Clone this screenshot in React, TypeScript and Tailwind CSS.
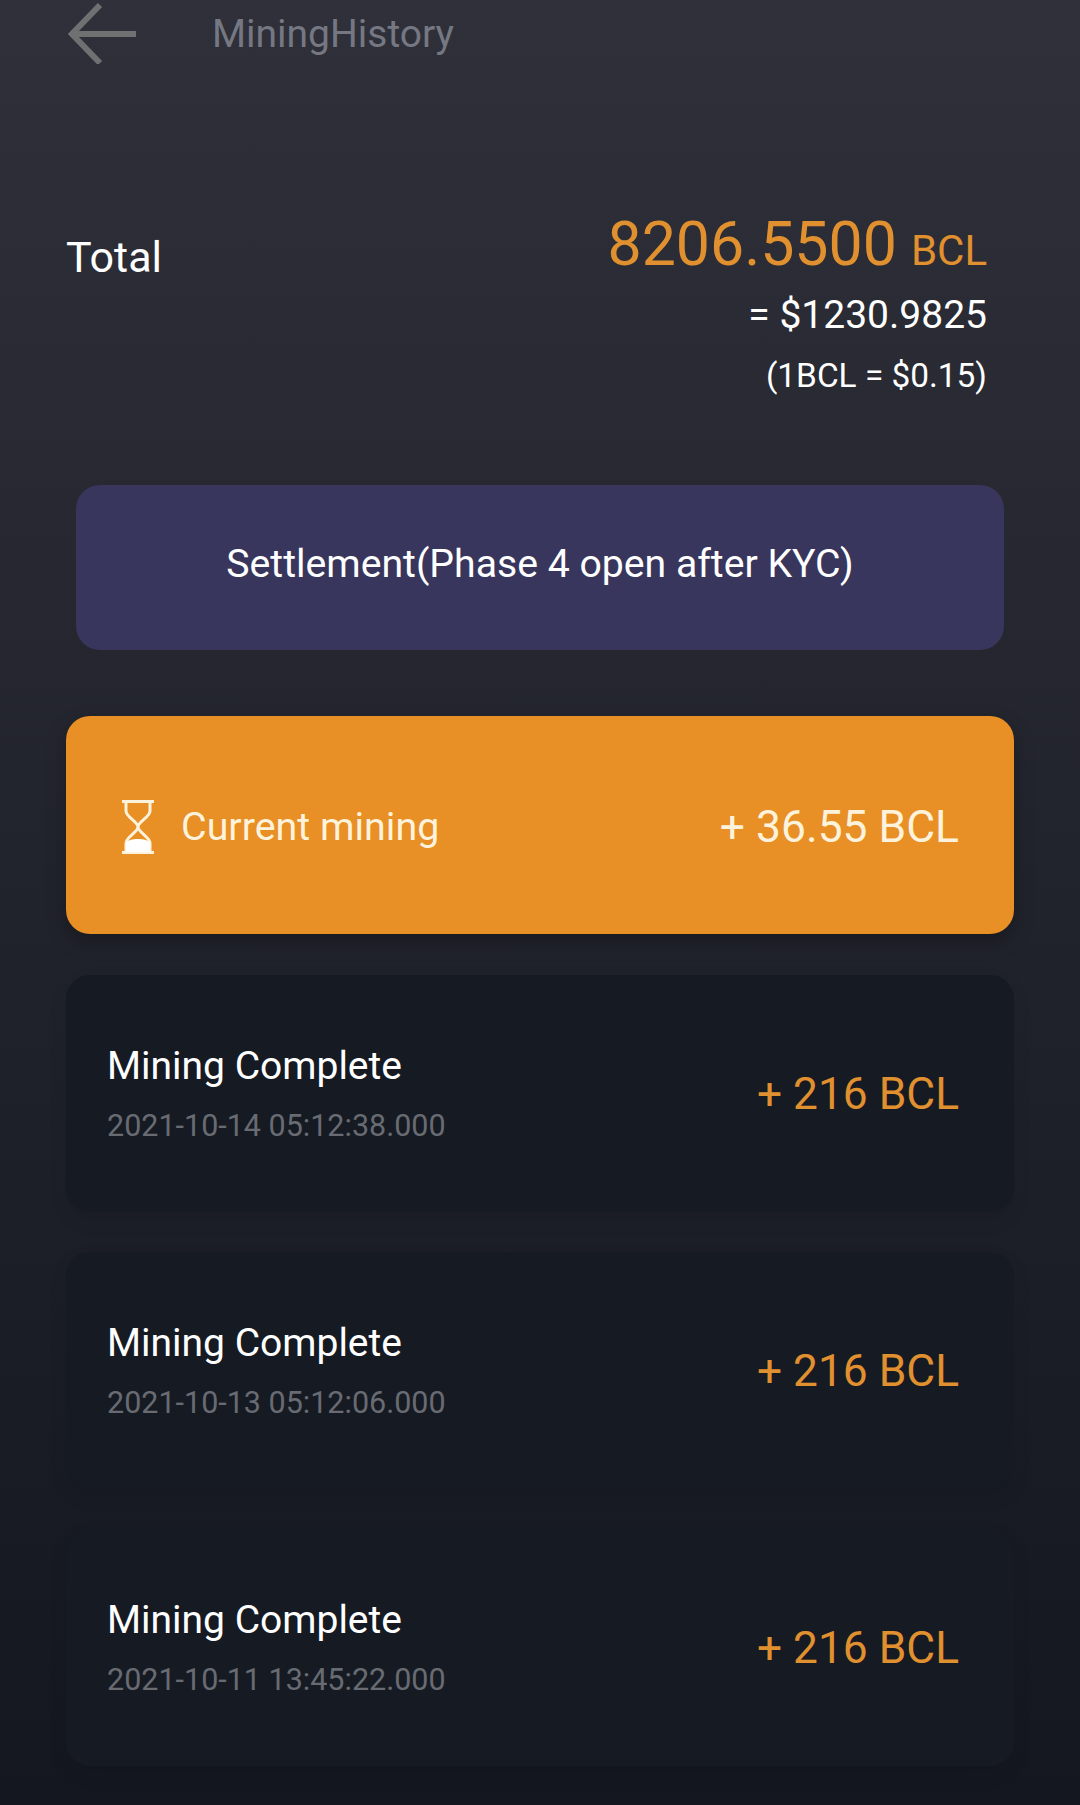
const font = { fontFamily: "Roboto, sans-serif" };

const records = [
  { title: "Mining Complete", date: "2021-10-14 05:12:38.000", amount: "+ 216 BCL" },
  { title: "Mining Complete", date: "2021-10-13 05:12:06.000", amount: "+ 216 BCL" },
  { title: "Mining Complete", date: "2021-10-11 13:45:22.000", amount: "+ 216 BCL" },
];

const Hourglass = () => (
  <svg width="34" height="54" viewBox="0 0 34 54" fill="none" className="shrink-0">
    <path d="M1 1.5H33M1 52.5H33" stroke="#fdf3dc" strokeWidth="3" />
    <path d="M5 2V11C5 17 17 22 17 27C17 32 5 37 5 43V52M29 2V11C29 17 17 22 17 27C17 32 29 37 29 43V52" stroke="#fdf3dc" strokeWidth="3" />
    <path d="M5 52V43C6 40 12 39 17 39C22 39 28 40 29 43V52Z" fill="#ffffff" />
  </svg>
);

const Record = ({ title, date, amount }: { title: string; date: string; amount: string }) => (
  <div className="h-[237px] rounded-[24px] bg-[#161a23] pl-[41px] pr-[55px] flex items-center justify-between shadow-[0_8px_20px_rgba(0,0,0,0.08)]">
    <div className="-mt-[1px]">
      <p className="-mb-[5px] text-[39px] leading-[50px] text-white">{title}</p>
      <p className="mt-[20px] text-[30.5px] leading-[40px] text-[#686b72]">{date}</p>
    </div>
    <p className="mt-[1px] text-[44.3px] leading-[52px] text-[#e0902f]">{amount}</p>
  </div>
);

export default function App() {
  return (
    <div style={font} className="w-[1080px] h-[1805px] overflow-hidden bg-gradient-to-b from-[#2f3039] to-[#14171f]">
      {/* Header */}
      <div className="h-[66px] flex items-center pl-[68px]">
        <svg width="70" height="62" viewBox="0 0 70 62" fill="none" className="shrink-0">
          <path d="M68 32H6M32 3L4 32L32 61" stroke="#6f7072" strokeWidth="6" />
        </svg>
        <h1 className="ml-[74px] mt-[2px] text-[39px] leading-[50px] text-[#757882]">MiningHistory</h1>
      </div>

      {/* Total */}
      <div className="mt-[144px] pl-[66px] pr-[93px] flex justify-between">
        <p className="mt-[19px] text-[43px] leading-[56px] text-white">Total</p>
        <div className="flex flex-col items-end">
          <p className="text-[#e0902f] text-[60.8px] leading-[70px]">
            8206.5500<span className="ml-[14px] text-[42px]">BCL</span>
          </p>
          <p className="mt-[4px] text-[39px] leading-[50px] text-white">= $1230.9825</p>
          <p className="mt-[14px] text-[33.4px] leading-[44px] text-white">(1BCL = $0.15)</p>
        </div>
      </div>

      {/* Settlement */}
      <div className="mt-[87px] mx-[76px] h-[165px] rounded-[24px] bg-[#38365c] flex items-center justify-center">
        <p className="-mt-[8px] text-[39.2px] leading-[50px] text-white">Settlement(Phase 4 open after KYC)</p>
      </div>

      <div className="mt-[66px] mx-[66px] flex flex-col gap-[40px]">
        {/* Current mining */}
        <div className="h-[218px] mb-[1px] rounded-[24px] bg-[#e88f25] pl-[55px] pr-[55px] flex items-center justify-between shadow-[0_8px_20px_rgba(0,0,0,0.25)]">
          <div className="mt-[4px] flex items-center gap-[26px]">
            <Hourglass />
            <span className="text-[39.4px] leading-[50px] text-[#fdf3dc]">Current mining</span>
          </div>
          <span className="mt-[4px] text-[44.4px] leading-[52px] text-[#fdf3dc]">+ 36.55 BCL</span>
        </div>

        {records.map((r) => (
          <Record key={r.date} {...r} />
        ))}
      </div>
    </div>
  );
}
